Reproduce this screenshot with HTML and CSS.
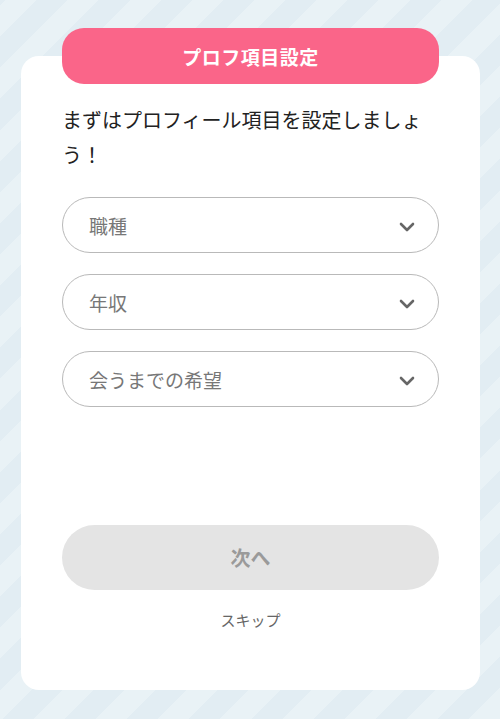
FILE: index.html
```html
<!DOCTYPE html>
<html lang="ja">
<head>
<meta charset="utf-8">
<link rel="stylesheet" href="styles.css">
</head>
<body>
<div class="page">
  <div class="card">
    <div class="header">プロフ項目設定</div>
    <p class="lead">まずはプロフィール項目を設定しましょう！</p>
    <div class="fields">
      <div class="select"><span>職種</span><svg class="chev" width="16" height="10" viewBox="0 0 16 10"><polyline points="2,2 8,8 14,2" fill="none" stroke="#666" stroke-width="2.6" stroke-linecap="round" stroke-linejoin="round"/></svg></div>
      <div class="select"><span>年収</span><svg class="chev" width="16" height="10" viewBox="0 0 16 10"><polyline points="2,2 8,8 14,2" fill="none" stroke="#666" stroke-width="2.6" stroke-linecap="round" stroke-linejoin="round"/></svg></div>
      <div class="select"><span>会うまでの希望</span><svg class="chev" width="16" height="10" viewBox="0 0 16 10"><polyline points="2,2 8,8 14,2" fill="none" stroke="#666" stroke-width="2.6" stroke-linecap="round" stroke-linejoin="round"/></svg></div>
    </div>
    <div class="next">次へ</div>
    <div class="skip">スキップ</div>
  </div>
</div>
</body>
</html>
```
FILE: styles.css
```css
html, body {
  margin: 0;
  padding: 0;
}
body {
  width: 500px;
  height: 719px;
  overflow: hidden;
  font-family: "Noto Sans CJK JP", "Noto Sans", sans-serif;
  background: repeating-linear-gradient(-45deg, #e9f2f6 0 22px, #e2edf3 22px 44px);
}
.page {
  padding: 56px 20px 0 21px;
}
.card {
  background: #fff;
  border-radius: 18px;
  padding: 0 41px 59px;
  display: flex;
  flex-direction: column;
}
.header {
  margin-top: -28px;
  height: 56px;
  border-radius: 22px;
  background: #fa6589;
  color: #fff;
  font-weight: 700;
  font-size: 19px;
  display: flex;
  align-items: center;
  justify-content: center;
  letter-spacing: 0.5px;
}
.lead {
  margin: 18px 0 0;
  font-size: 20px;
  line-height: 35px;
  color: #222;
}
.fields {
  margin-top: 25px;
  display: flex;
  flex-direction: column;
  gap: 21px;
}
.select {
  height: 54px;
  border: 1px solid #b9b9b9;
  border-radius: 28px;
  display: flex;
  align-items: center;
  justify-content: space-between;
  padding: 0 23px 0 26px;
  font-size: 19px;
  color: #777;
}
.chev {
  margin-top: 4px;
}
.next {
  margin-top: 118px;
  height: 65px;
  border-radius: 33px;
  background: #e4e4e4;
  color: #9a9a9a;
  font-weight: 700;
  font-size: 20px;
  display: flex;
  align-items: center;
  justify-content: center;
}
.skip {
  margin-top: 19px;
  text-align: center;
  font-size: 15px;
  line-height: 22px;
  color: #666;
}
```
